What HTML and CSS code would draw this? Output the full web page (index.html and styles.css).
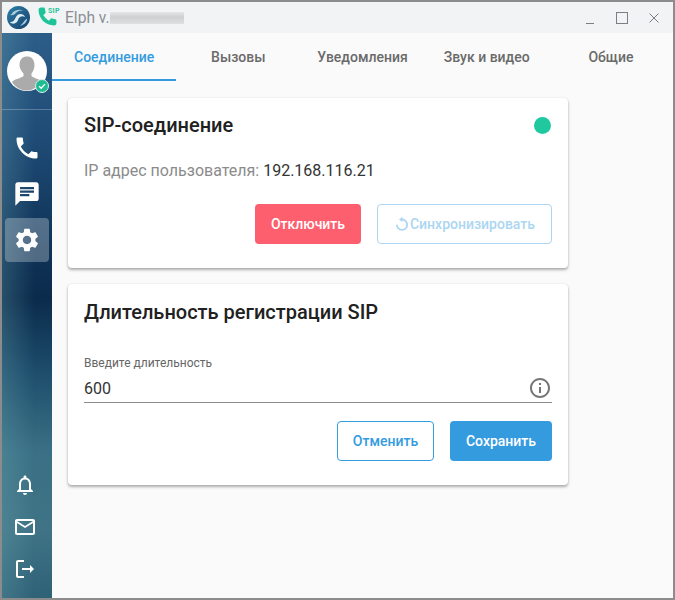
FILE: index.html
```
<!DOCTYPE html>
<html lang="ru">
<head>
<meta charset="utf-8">
<title>Elph</title>
<link rel="stylesheet" href="styles.css">
</head>
<body>
<div class="window">
  <header class="titlebar">
    <svg class="logo" viewBox="0 0 24 24" width="23" height="23">
      <defs>
        <linearGradient id="lg" x1="0" y1="0" x2="1" y2="1"><stop offset="0" stop-color="#2f7ea8"/><stop offset="1" stop-color="#16426c"/></linearGradient>
      </defs>
      <circle cx="12" cy="12" r="12" fill="url(#lg)"/>
      <path d="M3 17c3 2.500 6 1.500 7.500-.5 1.500-2 1-3.500 3-5 1.500-1 3.500-1 5.500 0-1.500-3-5.500-4-8-2-2.500 2-2 4-4 6-1 1-2.500 1.500-4 1.500z" fill="#dfecf2"/>
      <path d="M6 6.500C9 3.500 14 3 17.500 5 15 4.500 11.500 5 9.500 7 8.500 8 7.500 9 6 9.500c-1 .3-2 0-2.500-.5 1 0 1.800-1.200 2.500-2.500z" fill="#a9cfe0"/>
      <path d="M21 13c0 3.500-3 7-7.500 7.500 2-1 3-2.500 4-4 .8-1.300 2-2.500 3.500-3.500z" fill="#a9cfe0"/>
    </svg>
    <svg class="sip-icon" viewBox="0 0 20 20" width="21" height="21">
      <path d="M3.6 1.500C2.400 1.500 1.500 2.400 1.500 3.600 1.500 12 8 18.500 16.400 18.500c1.200 0 2.100-.9 2.100-2.100v-2.700c0-.6-.4-1.100-1-1.200l-3.300-.7c-.5-.1-.9 0-1.200.4l-1.600 1.900C8.900 12.500 7.200 10.700 6 8.600l1.800-1.500c.4-.3.500-.8.400-1.200L7.500 2.500c-.1-.6-.6-1-1.200-1z" fill="#1fc39a"/>
    </svg>
    <span class="sip-label">SIP</span>
    <span class="app-name">Elph v.</span>
    <span class="smear"></span>
    <div class="controls">
      <span class="ctl-min"></span>
      <span class="ctl-max"></span>
      <svg class="ctl-close" viewBox="0 0 10 10" width="10" height="10"><path d="M.5.500l9 9M9.500.500l-9 9" stroke="#7b7f84" stroke-width="1" fill="none"/></svg>
    </div>
  </header>
  <div class="body">
    <aside class="sidebar">
      <div class="avatar-block">
        <div class="avatar">
          <svg viewBox="0 0 40 40" width="40" height="40">
            <circle cx="20" cy="20" r="20" fill="#fff"/>
            <path d="M12.500 14c0-6 3.500-8.500 7.500-8.500s7.500 2.500 7.500 8.500c0 3.500-1.300 6.500-3 8.500v2.500c1.500 2 8.500 3 10.500 6-3 4-9 8.500-15 8.500S8 36 5 31c2-3 10-4 11.500-6v-2.500c-2-2-4-5-4-8.500z" fill="#ababab"/>
          </svg>
          <span class="status-badge">
            <svg viewBox="0 0 12 12" width="10" height="10"><path d="M2.500 6.300l2.500 2.400 4.500-5" stroke="#fff" stroke-width="1.600" fill="none"/></svg>
          </span>
        </div>
      </div>
      <nav class="nav-main">
        <div class="nav-item">
          <svg viewBox="0 0 24 24" width="28" height="28"><path d="M6.620 10.790c1.440 2.830 3.760 5.140 6.590 6.590l2.200-2.200c.27-.27.670-.36 1.020-.24 1.120.37 2.330.57 3.570.57.550 0 1 .45 1 1V20c0 .55-.45 1-1 1-9.390 0-17-7.610-17-17 0-.55.450-1 1-1h3.500c.55 0 1 .45 1 1 0 1.250.2 2.450.57 3.570.11.350.03.740-.25 1.020l-2.200 2.200z" fill="#fff"/></svg>
        </div>
        <div class="nav-item">
          <svg viewBox="0 0 24 24" width="28" height="28"><path d="M20 2H4c-1.100 0-1.990.9-1.990 2L2 22l4-4h14c1.100 0 2-.9 2-2V4c0-1.100-.9-2-2-2zM6 9h12v2H6V9zm8 5H6v-2h8v2zm4-6H6V6h12v2z" fill="#fff"/></svg>
        </div>
        <div class="nav-item nav-active">
          <svg viewBox="0 0 24 24" width="28" height="28"><path d="M19.140 12.940c.04-.3.060-.61.060-.94 0-.32-.02-.64-.07-.94l2.030-1.580c.18-.14.230-.41.120-.61l-1.920-3.320c-.12-.22-.37-.29-.59-.22l-2.390.96c-.5-.38-1.030-.7-1.620-.94l-.36-2.540c-.04-.24-.24-.41-.48-.41h-3.840c-.24 0-.43.170-.47.410l-.36 2.540c-.59.240-1.130.57-1.620.94l-2.390-.96c-.22-.08-.47 0-.59.220L2.740 8.870c-.12.210-.08.470.12.610l2.030 1.580c-.05.300-.09.630-.09.940s.02.640.07.940l-2.030 1.580c-.18.140-.23.410-.12.610l1.920 3.320c.12.220.37.290.59.220l2.390-.96c.5.380 1.030.7 1.620.94l.36 2.540c.05.240.24.410.48.410h3.840c.24 0 .44-.17.470-.41l.36-2.540c.59-.24 1.130-.56 1.620-.94l2.390.96c.22.080.47 0 .59-.22l1.920-3.320c.12-.22.070-.47-.12-.61l-2.010-1.580zM12 15.600c-1.980 0-3.600-1.620-3.600-3.600s1.620-3.600 3.600-3.600 3.600 1.620 3.600 3.600-1.620 3.600-3.600 3.600z" fill="#fff"/></svg>
        </div>
      </nav>
      <nav class="nav-bottom">
        <div class="nav-small">
          <svg viewBox="0 0 24 24" width="24" height="24"><path d="M12 22c1.100 0 2-.9 2-2h-4c0 1.100.9 2 2 2zm6-6v-5c0-3.070-1.630-5.640-4.500-6.320V4c0-.83-.67-1.500-1.500-1.500s-1.500.67-1.500 1.500v.68C7.640 5.360 6 7.920 6 11v5l-2 2v1h16v-1l-2-2zm-2 1H8v-6c0-2.480 1.510-4.500 4-4.500s4 2.020 4 4.500v6z" fill="#fff"/></svg>
        </div>
        <div class="nav-small">
          <svg viewBox="0 0 24 24" width="24" height="24"><path d="M20 4H4c-1.100 0-1.990.9-1.990 2L2 18c0 1.100.9 2 2 2h16c1.100 0 2-.9 2-2V6c0-1.100-.9-2-2-2zm0 14H4V8l8 5 8-5v10zm-8-7L4 6h16l-8 5z" fill="#fff"/></svg>
        </div>
        <div class="nav-small">
          <svg viewBox="0 0 24 24" width="24" height="24"><path d="M5 5h6V3H5c-1.100 0-2 .9-2 2v14c0 1.100.9 2 2 2h6v-2H5V5zm16 7l-4-4v3H9v2h8v3l4-4z" fill="#fff"/></svg>
        </div>
      </nav>
    </aside>
    <main class="content">
      <div class="tabs">
        <div class="tab tab-active">Соединение</div>
        <div class="tab">Вызовы</div>
        <div class="tab">Уведомления</div>
        <div class="tab">Звук и видео</div>
        <div class="tab">Общие</div>
      </div>
      <div class="cards">
        <section class="card card-sip">
          <div class="card-head">
            <h2 class="card-title">SIP-соединение</h2>
            <span class="dot"></span>
          </div>
          <p class="ip-line"><span class="ip-label">IP адрес пользователя:</span> <span class="ip-value">192.168.116.21</span></p>
          <div class="actions">
            <button class="btn btn-red">Отключить</button>
            <button class="btn btn-disabled">
              <svg viewBox="0 0 16 16" width="16" height="16"><path d="M8 3.500a5.200 5.200 0 1 1-5.200 5.200" stroke="#acd6f2" stroke-width="1.800" fill="none"/><path d="M8.500 .8v5.400L5 3.500z" fill="#acd6f2"/></svg>Синхронизировать
            </button>
          </div>
        </section>
        <section class="card card-reg">
          <h2 class="card-title">Длительность регистрации SIP</h2>
          <div class="field">
            <label class="field-label">Введите длительность</label>
            <div class="field-row">
              <span class="field-value">600</span>
              <svg viewBox="0 0 24 24" width="24" height="24"><path d="M11 7h2v2h-2zm0 4h2v6h-2zm1-9C6.480 2 2 6.480 2 12s4.480 10 10 10 10-4.480 10-10S17.520 2 12 2zm0 18c-4.410 0-8-3.590-8-8s3.590-8 8-8 8 3.590 8 8-3.590 8-8 8z" fill="#757575"/></svg>
            </div>
          </div>
          <div class="actions">
            <button class="btn btn-outline">Отменить</button>
            <button class="btn btn-blue">Сохранить</button>
          </div>
        </section>
      </div>
    </main>
  </div>
</div>
</body>
</html>
```

FILE: styles.css
```
* { box-sizing: border-box; }
html, body { margin: 0; padding: 0; }
body { width: 675px; height: 600px; overflow: hidden; font-family: Roboto, "Liberation Sans", sans-serif; }
.window { width: 675px; height: 600px; border: 2px solid #8c8c8c; display: flex; flex-direction: column; background: #fafafa; }
.titlebar { height: 31px; flex: none; display: flex; align-items: center; background: #f1f3f5; position: relative; }
.logo { margin-left: 5px; flex: none; }
.sip-icon { position: absolute; left: 35px; top: 4px; }
.sip-label { position: absolute; left: 45px; top: 5px; font-size: 7px; line-height: 8px; font-weight: 700; color: #1fc39a; letter-spacing: .3px; background: #f1f3f5; padding-left: 1px; }
.app-name { margin-left: 35px; font-size: 15.6px; color: #8b8f94; }
.smear { width: 74px; height: 12px; background: linear-gradient(180deg, #e4e5e7, #cfd0d2 45%, #dedfe1); }
.controls { margin-left: auto; display: flex; align-items: center; height: 100%; }
.ctl-min { width: 8px; height: 1px; background: #7b7f84; margin-right: 22px; margin-top: 11px; }
.ctl-max { width: 12px; height: 12px; border: 1px solid #7b7f84; margin-right: 21px; }
.ctl-close { margin-right: 14px; }
.body { flex: 1; display: flex; min-height: 0; }
.sidebar { width: 50px; flex: none; display: flex; flex-direction: column;
  background: linear-gradient(90deg, rgba(110,170,180,.28), rgba(0,0,0,0) 65%), linear-gradient(180deg, #2c5d88 0%, #1f4c77 18%, #0f3357 38%, #0b2b4c 47%, #1d4d6b 60%, #3a7085 74%, #3f7385 88%, #2f6177 100%); }
.avatar-block { height: 77px; flex: none; padding: 18px 0 0 5px; border-bottom: 1px solid rgba(255,255,255,.25); }
.avatar { width: 40px; height: 40px; position: relative; }
.avatar svg { display: block; }
.status-badge { position: absolute; right: -2px; bottom: -2px; width: 14px; height: 14px; border-radius: 50%; background: #1fbc93; border: 1px solid #dfeee9; display: flex; align-items: center; justify-content: center; }
.nav-main { display: flex; flex-direction: column; align-items: center; padding-top: 16px; gap: 2px; }
.nav-item { width: 44px; height: 44px; display: flex; align-items: center; justify-content: center; border-radius: 4px; }
.nav-active { background: rgba(255,255,255,.28); }
.nav-bottom { margin-top: auto; display: flex; flex-direction: column; align-items: center; padding: 0 4px 17px 0; gap: 18px; }
.nav-small { height: 24px; display: flex; }
.content { flex: 1; min-width: 0; display: flex; flex-direction: column; }
.tabs { height: 48px; flex: none; display: flex; }
.tab { width: 124.3px; height: 48px; display: flex; align-items: center; justify-content: center; padding-top: 2px; font-size: 14px; font-weight: 500; color: #6a6a6a; border-bottom: 2px solid transparent; }
.tab-active { color: #349bdf; border-bottom-color: #349bdf; }
.cards { padding: 17px 0 0 16px; display: flex; flex-direction: column; gap: 16px; width: 516px; }
.card { background: #fff; border-radius: 4px; box-shadow: 0 2px 3px rgba(0,0,0,.3), 0 0 2px rgba(0,0,0,.1); padding: 16px; }
.card-sip { height: 170px; padding-top: 15px; }
.card-reg { height: 201px; }
.card-head { display: flex; align-items: center; justify-content: space-between; padding-right: 1px; }
.card-title { margin: 0; font-size: 20px; line-height: 24px; font-weight: 500; color: #212121; }
.dot { width: 17px; height: 17px; border-radius: 50%; background: #1fc89f; }
.ip-line { margin: 24px 0 0; font-size: 16px; line-height: 20px; }
.ip-label { color: #8b8b8b; }
.ip-value { color: #333; }
.actions { display: flex; justify-content: flex-end; gap: 16px; }
.card-sip .actions { margin-top: 23px; }
.btn { height: 40px; border-radius: 4px; font-family: inherit; font-size: 14px; font-weight: 500; display: flex; align-items: center; justify-content: center; border: 1px solid transparent; padding: 0; }
.btn-red { width: 106px; background: #fe5f6f; color: #fff; }
.btn-disabled { width: 175px; background: #fff; color: #acd6f2; border-color: #acd6f2; }
.btn-outline { width: 97px; background: #fff; color: #349bdf; border-color: #349bdf; }
.btn-blue { width: 102px; background: #349bdf; color: #fff; }
.field { margin-top: 33px; height: 46px; border-bottom: 1px solid #8c8c8c; }
.field-label { display: block; font-size: 12px; line-height: 13px; color: #666; }
.field-row { display: flex; align-items: center; justify-content: space-between; height: 24px; margin-top: 6px; }
.field-value { font-size: 16px; color: #333; }
.card-reg .actions { margin-top: 18px; }
```
